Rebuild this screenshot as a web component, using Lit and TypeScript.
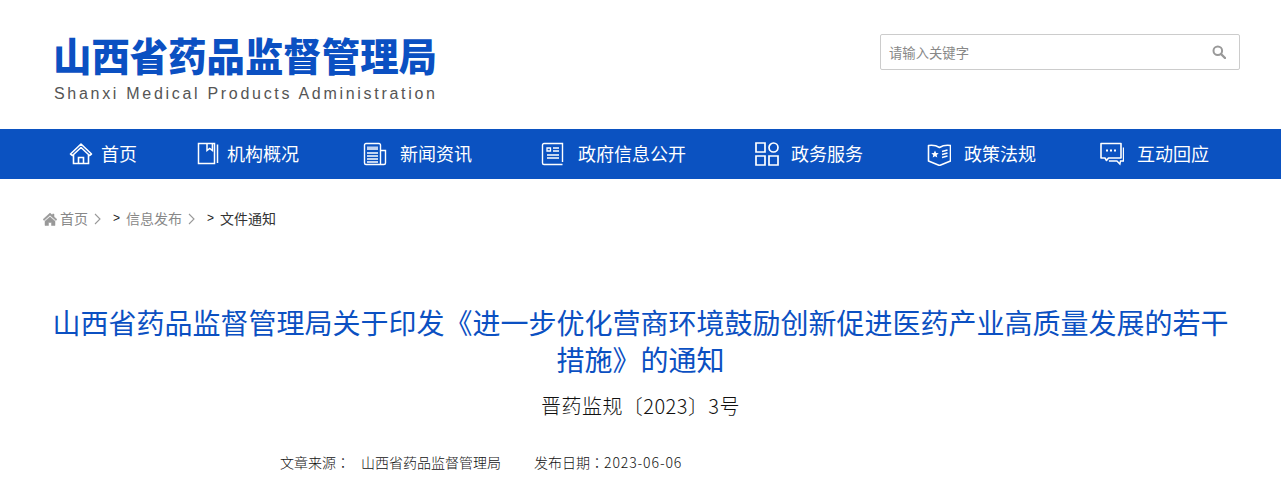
import { LitElement, html, css, svg } from "lit";
import { customElement } from "lit/decorators.js";

const icons = {
  home: svg`<path d="M1.500 12 12 2l10.500 10-2 1.500L12 5.500 3.500 13.500Z" fill="none" stroke="#fff" stroke-width="1.600" stroke-linejoin="round"/><path d="M4.500 13v8.500h15V13M9.500 21.500v-6h5v6" fill="none" stroke="#fff" stroke-width="1.600"/>`,
  book: svg`<path d="M1.500 1.500h16v20h-16ZM10 1.500v7l2.700-2 2.700 2v-7M20.500 2.500v18.500" fill="none" stroke="#fff" stroke-width="1.500"/>`,
  news: svg`<path d="M17.500 22.500V3A1.500 1.500 0 0 0 16 1.500H3A1.500 1.500 0 0 0 1.500 3v18A1.500 1.500 0 0 0 3 22.500h18a1.500 1.500 0 0 0 1.500-1.500V8.500h-5" fill="none" stroke="#fff" stroke-width="1.400"/><path d="M4 4.500h11v3.500H4Z" fill="#fff" fill-opacity=".75"/><path d="M4 11h11M4 14h11M4 17h11M4 20h11" fill="none" stroke="#fff" stroke-width="1.300"/>`,
  info: svg`<path d="M21.500 20V1.500H3A1.500 1.500 0 0 0 1.500 3v18A1.500 1.500 0 0 0 3 22.500h18.500" fill="none" stroke="#fff" stroke-width="1.400"/><path d="M6 6h3.500v3H6Z" fill="none" stroke="#fff" stroke-width="1.300"/><path d="M12 6h6M12 9h6M6 13h12M6 16h12" fill="none" stroke="#fff" stroke-width="1.500"/>`,
  grid: svg`<path d="M1 1h9v9H1ZM1 14h9v9H1ZM14 14h9v9h-9Z" fill="none" stroke="#fff" stroke-width="1.700"/><circle cx="18.500" cy="5.500" r="4.500" fill="none" stroke="#fff" stroke-width="1.700"/>`,
  law: svg`<path d="M1.500 3.500C5 3 9 3.300 12.500 5.500 16 3.300 20 3 23.500 3.500v15.500l-11 4.500-11-4.500Z" fill="none" stroke="#fff" stroke-width="1.600" stroke-linejoin="round"/><path d="M8 8.500l1.100 2.500 2.600.3-2 1.700.6 2.600-2.300-1.300-2.300 1.300.6-2.600-2-1.700 2.600-.3Z" fill="#fff"/><path d="M15 9.500l5.500-1.500M15 12.500l5.500-1.500M15 15.500l5.500-1.500" fill="none" stroke="#fff" stroke-width="1.500"/>`,
  chat: svg`<path d="M1 1.500h20v14.500H8.500l-2 2.500L5 16H1Z" fill="none" stroke="#fff" stroke-width="1.600" stroke-linejoin="round"/><path d="M23.500 5.500v13.500h-3l-.6 3-3-3h-8" fill="none" stroke="#fff" stroke-width="1.400"/><path d="M6 8.500h2M10 8.500h2M14 8.500h2" fill="none" stroke="#fff" stroke-width="2"/>`,
};

const nav: [string, keyof typeof icons][] = [
  ["首页", "home"],
  ["机构概况", "book"],
  ["新闻资讯", "news"],
  ["政府信息公开", "info"],
  ["政务服务", "grid"],
  ["政策法规", "law"],
  ["互动回应", "chat"],
];

@customElement("app-root")
export class AppRoot extends LitElement {
  static styles = css`
    :host {
      display: block;
      height: 477px;
      overflow: hidden;
      background: #fff;
      font-family: "Noto Sans CJK SC", "Liberation Sans", sans-serif;
      color: #333;
    }
    .head {
      height: 129px;
      display: flex;
      justify-content: space-between;
      padding: 0 41px 0 54px;
      box-sizing: border-box;
    }
    .logo { padding-top: 32px; }
    .logo-cn {
      font-size: 38.4px;
      line-height: 44px;
      font-weight: 900;
      color: #0b50c2;
      white-space: nowrap;
      margin-left: -1px;
    }
    .logo-en {
      font-family: "Liberation Sans", sans-serif;
      font-size: 16px;
      line-height: 18px;
      margin-top: 9px;
      letter-spacing: 2.7px;
      color: #555;
      white-space: nowrap;
    }
    .search {
      margin-top: 34px;
      width: 360px;
      height: 36px;
      box-sizing: border-box;
      border: 1px solid #ccc;
      border-radius: 2px;
      display: flex;
      align-items: center;
      justify-content: space-between;
      padding: 0 13px 0 8px;
      font-size: 13.33px;
      color: #888;
    }
    .search svg { width: 14px; height: 14px; display: block; }
    .nav {
      height: 50px;
      background: #0b52c1;
      display: grid;
      grid-template-columns: 128px 166px 178px 214px 172px 173px 110px;
      padding-left: 69px;
      align-items: center;
    }
    .item {
      display: flex;
      align-items: center;
      color: #fff;
      font-size: 18px;
      white-space: nowrap;
    }
    .item span { padding-bottom: 2px; }
    .item svg { width: 24px; height: 24px; margin-right: 8px; flex: none; display: block; }
    .item:nth-child(2) svg { margin-right: 6px; }
    .item:nth-child(3) svg, .item:nth-child(4) svg, .item:nth-child(6) svg, .item:nth-child(7) svg { margin-right: 13px; }
    .item:nth-child(5) svg { margin-right: 12px; }
    .crumbs {
      display: flex;
      align-items: center;
      padding: 30px 0 0 43px;
      height: 19px;
      font-size: 14px;
      line-height: 19px;
      color: #888;
    }
    .crumbs svg { width: 14px; height: 14px; margin-right: 3px; display: block; }
    .crumbs .chev { width: 7px; height: 12px; margin: 0 12px 0 6px; }
    .crumbs .gt { color: #222; margin-right: 6px; font-family: "Liberation Sans", sans-serif; font-size: 12px; }
    .crumbs .cur { color: #333; }
    h1 {
      margin: 76px 0 0;
      padding: 0 40px;
      font-size: 28px;
      line-height: 37px;
      font-weight: 400;
      text-align: center;
      color: #0b50c2;
    }
    .sub {
      margin-top: 13px;
      font-size: 20px;
      line-height: 30px;
      letter-spacing: 0.45px;
      font-weight: 300;
      text-align: center;
      color: #111;
    }
    .meta {
      display: flex;
      margin-top: 31px;
      padding-left: 280px;
      font-size: 14px;
      line-height: 20px;
      font-weight: 300;
      color: #111;
      white-space: nowrap;
    }
    .colon { font-family: "Noto Sans CJK TC", sans-serif; }
    .src { width: 81px; }
    .org { width: 173px; }
    .date { letter-spacing: 0.9px; }
  `;

  render() {
    return html`
      <div class="head">
        <div class="logo">
          <div class="logo-cn">山西省药品监督管理局</div>
          <div class="logo-en">Shanxi Medical Products Administration</div>
        </div>
        <div class="search">
          <span>请输入关键字</span>
          <svg viewBox="0 0 14 14"><circle cx="5.800" cy="5.800" r="4.300" fill="none" stroke="#999" stroke-width="2"/><path d="M9 9l4 4" stroke="#999" stroke-width="2.400" stroke-linecap="round"/></svg>
        </div>
      </div>
      <div class="nav">
        ${nav.map(([t, i]) => html`<div class="item"><svg viewBox="0 0 24 24">${icons[i]}</svg><span>${t}</span></div>`)}
      </div>
      <div class="crumbs">
        <svg viewBox="0 0 14 14"><path d="M7 1 0 7.500 1 8.500 7 3.200 13 8.500 14 7.500 11 4.700V2H9.500v1.300ZM2 9.200 7 4.800 12 9.200V13.500H8.500V10.500h-3V13.500H2Z" fill="#999" stroke="#999" stroke-width=".5"/></svg>
        <span>首页</span>
        <svg class="chev" viewBox="0 0 7 12"><path d="M1 1l5 5-5 5" fill="none" stroke="#999" stroke-width="1.100"/></svg>
        <span class="gt">&gt;</span>
        <span>信息发布</span>
        <svg class="chev" viewBox="0 0 7 12"><path d="M1 1l5 5-5 5" fill="none" stroke="#999" stroke-width="1.100"/></svg>
        <span class="gt">&gt;</span>
        <span class="cur">文件通知</span>
      </div>
      <h1>山西省药品监督管理局关于印发《进一步优化营商环境鼓励创新促进医药产业高质量发展的若干措施》的通知</h1>
      <div class="sub">晋药监规〔2023〕3号</div>
      <div class="meta">
        <span class="src">文章来源<span class="colon">：</span></span>
        <span class="org">山西省药品监督管理局</span>
        <span>发布日期<span class="colon">：</span><span class="date">2023-06-06</span></span>
      </div>
    `;
  }
}
